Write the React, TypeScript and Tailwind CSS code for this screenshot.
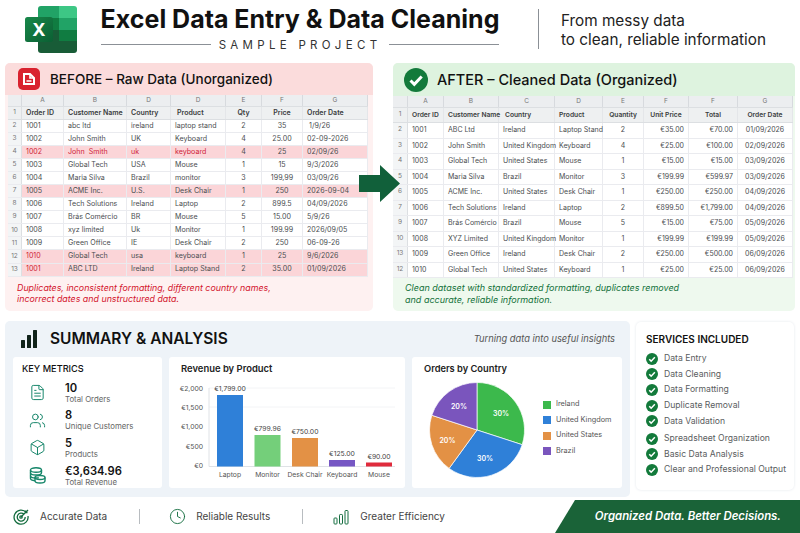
import { Box, Clock, FileText, Users, type LucideIcon } from 'lucide-react';

type Align = 'l' | 'm' | 'c' | 'r';

interface SheetRow {
  num: string;
  cells: string[];
  highlight?: boolean;
  redCells?: number;
}

const BEFORE_HEAD = ['Order ID', 'Customer Name', 'Country', 'Product', 'Qty', 'Price', 'Order Date'];
const BEFORE_ROWS: SheetRow[] = [
  { num: '2', cells: ['1001', 'abc ltd', 'ireland', 'laptop stand', '2', '35', ' 1/9/26'] },
  { num: '3', cells: ['1002', 'John Smith', 'UK', 'Keyboard', '4', '25.00', '02-09-2026'] },
  { num: '4', cells: ['1002', 'John  Smith', 'uk', 'keyboard', '4', '25', '02/09/26'], highlight: true, redCells: 4 },
  { num: '5', cells: ['1003', 'Global Tech', 'USA', 'Mouse', '1', '15', '9/3/2026'] },
  { num: '6', cells: ['1004', 'Maria Silva', 'Brazil', 'monitor', '3', '199,99', '03/09/26'] },
  { num: '7', cells: ['1005', 'ACME Inc.', 'U.S.', 'Desk Chair', '1', '250', '2026-09-04'], highlight: true },
  { num: '8', cells: ['1006', 'Tech Solutions', 'Ireland', 'Laptop', '2', '899.5', '04/09/2026'] },
  { num: '9', cells: ['1007', 'Brás Comércio', 'BR', 'Mouse', '5', '15.00', '5/9/26'] },
  { num: '10', cells: ['1008', 'xyz limited', 'Uk', 'Monitor', '1', '199.99', '2026/09/05'] },
  { num: '11', cells: ['1009', 'Green Office', 'IE', 'Desk Chair', '2', '250', '06-09-26'] },
  { num: '12', cells: ['1010', 'Global Tech', 'usa', 'keyboard', '1', '25', '9/6/2026'], highlight: true, redCells: 1 },
  { num: '13', cells: ['1001', 'ABC LTD', 'Ireland', 'Laptop Stand', '2', '35.00', '01/09/2026'], highlight: true, redCells: 1 },
];

const AFTER_HEAD = ['Order ID', 'Customer Name', 'Country', 'Product', 'Quantity', 'Unit Price', 'Total', 'Order Date'];
const AFTER_ROWS: SheetRow[] = [
  { num: '2', cells: ['1001', 'ABC Ltd', 'Ireland', 'Laptop Stand', '2', '€35.00', '€70.00', '01/09/2026'] },
  { num: '3', cells: ['1002', 'John Smith', 'United Kingdom', 'Keyboard', '4', '€25.00', '€100.00', '02/09/2026'] },
  { num: '4', cells: ['1003', 'Global Tech', 'United States', 'Mouse', '1', '€15.00', '€15.00', '03/09/2026'] },
  { num: '5', cells: ['1004', 'Maria Silva', 'Brazil', 'Monitor', '3', '€199.99', '€599.97', '03/09/2026'] },
  { num: '6', cells: ['1005', 'ACME Inc.', 'United States', 'Desk Chair', '1', '€250.00', '€250.00', '04/09/2026'] },
  { num: '7', cells: ['1006', 'Tech Solutions', 'Ireland', 'Laptop', '2', '€899.50', '€1,799.00', '04/09/2026'] },
  { num: '9', cells: ['1007', 'Brás Comércio', 'Brazil', 'Mouse', '5', '€15.00', '€75.00', '05/09/2026'] },
  { num: '10', cells: ['1008', 'XYZ Limited', 'United Kingdom', 'Monitor', '1', '€199.99', '€199.99', '05/09/2026'] },
  { num: '13', cells: ['1009', 'Green Office', 'Ireland', 'Desk Chair', '2', '€250.00', '€500.00', '06/09/2026'] },
  { num: '12', cells: ['1010', 'Global Tech', 'United States', 'Keyboard', '1', '€25.00', '€25.00', '06/09/2026'] },
];

const BARS = [
  { name: 'Laptop', label: '€1,799.00', x: 48, top: 38, color: '#2f80d8' },
  { name: 'Monitor', label: '€799.96', x: 85.5, top: 78, color: '#74cf7a' },
  { name: 'Desk Chair', label: '€750.00', x: 123, top: 81, color: '#e39145' },
  { name: 'Keyboard', label: '€125.00', x: 160, top: 103, color: '#7657c4' },
  { name: 'Mouse', label: '€90.00', x: 197, top: 105.5, color: '#e02b3c' },
];

const AXIS = [
  { label: '€2,000', y: 31 },
  { label: '€1,500', y: 50 },
  { label: '€1,000', y: 69 },
  { label: '€500', y: 89 },
  { label: '€0', y: 108 },
];

const LEGEND = [
  { name: 'Ireland', color: 'bg-[#3cb94c]' },
  { name: 'United Kingdom', color: 'bg-[#2f80d8]' },
  { name: 'United States', color: 'bg-[#e39145]' },
  { name: 'Brazil', color: 'bg-[#7a55bd]' },
];

const SERVICES = [
  'Data Entry',
  'Data Cleaning',
  'Data Formatting',
  'Duplicate Removal',
  'Data Validation',
  'Spreadsheet Organization',
  'Basic Data Analysis',
  'Clear and Professional Output',
];

function ExcelLogo() {
  return (
    <svg width="53" height="48" viewBox="0 0 53 48" className="shrink-0">
      <defs>
        <linearGradient id="xl-front" x1="0" y1="0" x2="1" y2="1">
          <stop offset="0" stopColor="#18884a" />
          <stop offset="1" stopColor="#0b5f33" />
        </linearGradient>
      </defs>
      <path d="M16 1h18v12H13V4a3 3 0 0 1 3-3z" fill="#21a366" />
      <path d="M34 1h15a3 3 0 0 1 3 3v9H34z" fill="#3dc785" />
      <rect x="13" y="13" width="21" height="12" fill="#107c41" />
      <rect x="34" y="13" width="18" height="12" fill="#21a366" />
      <rect x="13" y="25" width="21" height="11" fill="#185c37" />
      <rect x="34" y="25" width="18" height="11" fill="#107c41" />
      <path d="M13 36h39v9a3 3 0 0 1-3 3H16a3 3 0 0 1-3-3z" fill="#185c37" />
      <rect x="0" y="12" width="28" height="25" rx="2.5" fill="url(#xl-front)" />
      <text x="14" y="31" textAnchor="middle" fontSize="18" fontWeight="700" fill="#fff" fontFamily="Inter, sans-serif">
        X
      </text>
    </svg>
  );
}

function BeforeIcon() {
  return (
    <svg width="22" height="22" viewBox="0 0 22 22" className="shrink-0">
      <rect width="22" height="22" rx="5" fill="#d9222f" />
      <path d="M6 6h6l4 4v6H6z" fill="none" stroke="#fff" strokeWidth="2" />
      <path d="M12 6v4h4M8.500 13h5" fill="none" stroke="#fff" strokeWidth="1.6" />
    </svg>
  );
}

function CheckDot({ size }: { size: number }) {
  return (
    <svg width={size} height={size} viewBox="0 0 24 24" className="shrink-0">
      <circle cx="12" cy="12" r="12" fill="#137a3b" />
      <path d="M6.500 12.500l3.800 3.800 7.400-7.800" fill="none" stroke="#fff" strokeWidth="3" />
    </svg>
  );
}

function CoinStack({ size, strokeWidth, className }: { size: number; strokeWidth: number; className: string }) {
  return (
    <svg width={size} height={size} viewBox="0 0 17 17" fill="none" stroke="currentColor" strokeWidth={strokeWidth} className={className}>
      <ellipse cx="7" cy="3" rx="5.500" ry="2.200" />
      <path d="M1.500 3v2.800c0 1.200 2.500 2.200 5.500 2.200s5.500-1 5.500-2.200V3" />
      <path d="M1.500 5.800v3c0 1.200 2.500 2.200 5.500 2.200 1 0 2-.1 2.800-.3" />
      <ellipse cx="11" cy="10.500" rx="5" ry="2" />
      <path d="M6 10.500v3.300c0 1.200 2.200 2.200 5 2.200s5-1 5-2.200v-3.300" />
      <path d="M1.500 8.800v2.800c0 1.100 1.800 2 4.500 2.200" />
    </svg>
  );
}

const METRICS: { value: string; label: string; Icon: LucideIcon | typeof CoinStack }[] = [
  { value: '10', label: 'Total Orders', Icon: FileText },
  { value: '8', label: 'Unique Customers', Icon: Users },
  { value: '5', label: 'Products', Icon: Box },
  { value: '€3,634.96', label: 'Total Revenue', Icon: CoinStack },
];

function SheetTable({
  gridClass,
  letters,
  head,
  rows,
  aligns,
  headAligns,
  headHeight,
  rowHeight,
  textClass,
  headTextClass,
}: {
  gridClass: string;
  letters: string[];
  head: string[];
  rows: SheetRow[];
  aligns: Align[];
  headAligns: Align[];
  headHeight: string;
  rowHeight: string;
  textClass: string;
  headTextClass: string;
}) {
  const alignClass = (a: Align) => {
    if (a === 'c') return 'justify-center';
    if (a === 'r') return 'justify-end pr-[4px]';
    if (a === 'm') return 'justify-start pl-[6px]';
    return 'justify-start pl-[4px]';
  };

  return (
    <div className="bg-white">
      <div className={`grid ${gridClass} h-[12px] border-b border-[#dcdfe2] bg-[#eceef0] text-[6.5px] text-[#777]`}>
        <div className="border-r border-[#d7dade]" />
        {letters.map((l, i) => (
          <div key={i} className="flex items-center justify-center border-r border-[#d7dade]">
            {l}
          </div>
        ))}
      </div>
      <div className={`grid ${gridClass} ${headHeight} ${headTextClass} border-b border-[#dcdfe2] bg-[#eef0f1] font-semibold text-[#3a3d40]`}>
        <div className="flex items-center justify-center border-r border-[#dcdfe2] text-[6.5px] font-normal text-[#777]">1</div>
        {head.map((h, i) => (
          <div key={i} className={`flex items-center whitespace-nowrap border-r border-[#e4e6e9] ${alignClass(headAligns[i])}`}>
            {h}
          </div>
        ))}
      </div>
      {rows.map((row) => (
        <div key={row.num} className={`grid ${gridClass} ${rowHeight} ${textClass} border-b border-[#eaebef] text-[#4a4d50]`}>
          <div className="flex items-center justify-center border-r border-[#dcdfe2] bg-[#f3f5f6] text-[6.5px] text-[#777]">{row.num}</div>
          {row.cells.map((c, i) => (
            <div
              key={i}
              className={`flex items-center whitespace-pre border-r border-[#eaebef] ${alignClass(aligns[i])} ${
                row.highlight ? 'bg-[#fbd5d8]' : ''
              } ${row.redCells && i < row.redCells ? 'text-[#cf2337]' : ''}`}
            >
              {c}
            </div>
          ))}
        </div>
      ))}
    </div>
  );
}

function RevenueChart() {
  return (
    <svg width="236" height="131" viewBox="0 0 236 131" fontFamily="Inter, sans-serif">
      <path d="M40 31H226M40 50H226" stroke="#f3f4f6" />
      <path d="M40 31V109.500H226" fill="none" stroke="#dfe2e6" />
      {AXIS.map((a) => (
        <text key={a.label} x="34" y={a.y + 2.5} textAnchor="end" fontSize="6.8" fill="#555">
          {a.label}
        </text>
      ))}
      {BARS.map((b) => (
        <g key={b.name}>
          <rect x={b.x} y={b.top} width="26" height={109.5 - b.top} fill={b.color} />
          <text x={b.x + 13} y={b.top - 4} textAnchor="middle" fontSize="6.8" fill="#444">
            {b.label}
          </text>
          <text x={b.x + 13} y="120" textAnchor="middle" fontSize="6.8" fill="#555">
            {b.name}
          </text>
        </g>
      ))}
    </svg>
  );
}

function PieChart() {
  return (
    <svg width="100" height="100" viewBox="-50 -50 100 100" className="shrink-0" fontFamily="Inter, sans-serif">
      <path d="M0 0V-47.500A47.500 47.500 0 0 1 45.200 14.700Z" fill="#3cb94c" stroke="#fff" strokeWidth="0.7" />
      <path d="M0 0L45.200 14.700A47.500 47.500 0 0 1 -27.900 38.400Z" fill="#2f80d8" stroke="#fff" strokeWidth="0.7" />
      <path d="M0 0L-27.900 38.400A47.500 47.500 0 0 1 -45.200 -14.700Z" fill="#e39145" stroke="#fff" strokeWidth="0.7" />
      <path d="M0 0L-45.200 -14.700A47.500 47.500 0 0 1 0 -47.500Z" fill="#7a55bd" stroke="#fff" strokeWidth="0.7" />
      <g fontSize="7" fontWeight="600" fill="#fff" textAnchor="middle">
        <text x="24" y="-14.500">30%</text>
        <text x="8" y="31">30%</text>
        <text x="-29.500" y="13">20%</text>
        <text x="-18" y="-21">20%</text>
      </g>
    </svg>
  );
}

function TargetIcon() {
  return (
    <svg width="17" height="17" viewBox="0 0 17 17" fill="none" stroke="#136c3e" strokeWidth="1.3" className="shrink-0">
      <path d="M13.400 4.600A7 7 0 1 0 15 8" />
      <path d="M11 6.300A4 4 0 1 0 12.200 9" />
      <circle cx="8" cy="9" r="1.200" />
      <path d="M8 9l7-7M12.500 2.500v2h2" />
    </svg>
  );
}

function GrowthIcon() {
  return (
    <svg width="16" height="16" viewBox="0 0 16 16" fill="none" stroke="#136c3e" strokeWidth="1" className="shrink-0">
      <rect x="1" y="9" width="3" height="6" rx="0.8" />
      <rect x="6.500" y="5.500" width="3" height="9.500" rx="0.8" />
      <rect x="12" y="1.500" width="3" height="13.500" rx="0.8" />
    </svg>
  );
}

export default function App() {
  return (
    <div className="relative flex h-[533px] w-[800px] flex-col overflow-hidden bg-white font-['Inter',sans-serif] text-[#111]">
      {/* title strip */}
      <header className="flex h-[63px] shrink-0 items-center pb-[5px] pl-[25px]">
        <ExcelLogo />
        <div className="ml-[23px] -mt-[4px] flex w-[398px] flex-col items-center">
          <h1 className="whitespace-nowrap text-[25px] font-bold leading-[32px] text-[#111]">Excel Data Entry &amp; Data Cleaning</h1>
          <div className="mt-[3px] flex w-full items-center gap-[8px]">
            <span className="h-px flex-1 bg-[#8b9096]" />
            <span className="text-[11.500px] leading-[14px] tracking-[4.3px] text-[#333]">SAMPLE PROJECT</span>
            <span className="h-px flex-1 bg-[#8b9096]" />
          </div>
        </div>
        <span className="ml-[39px] h-[40px] w-px bg-[#8b9096]" />
        <p className="ml-[22px] pt-[1px] text-[15.300px] leading-[19px] text-[#222]">
          From messy data
          <br />
          to clean, reliable information
        </p>
      </header>

      {/* before / after */}
      <section className="relative flex h-[248px] shrink-0 gap-[20px] px-[5px]">
        <div className="flex w-[368px] flex-col rounded-[5px] bg-[#fef1f1]">
          <div className="flex h-[32px] shrink-0 items-center gap-[10px] rounded-t-[5px] bg-[#fbdcdc] pl-[13px]">
            <BeforeIcon />
            <h2 className="text-[13.500px] font-medium">BEFORE – Raw Data (Unorganized)</h2>
          </div>
          <div className="mx-[3px] w-[360px]">
            <SheetTable
              gridClass="grid-cols-[14px_42px_63px_44px_55px_36px_41px_65px]"
              letters={['A', 'B', 'D', 'D', 'E', 'F', 'G']}
              head={BEFORE_HEAD}
              rows={BEFORE_ROWS}
              aligns={['l', 'l', 'l', 'l', 'c', 'c', 'l']}
              headAligns={['l', 'l', 'l', 'm', 'c', 'c', 'l']}
              headHeight="h-[13px]"
              rowHeight="h-[13.050px]"
              textClass="text-[7.100px]"
              headTextClass="text-[7px]"
            />
          </div>
          <p className="ml-[12px] mt-[5px] text-[8.850px] italic leading-[11.500px] text-[#d3142c]">
            Duplicates, inconsistent formatting, different country names,
            <br />
            incorrect dates and unstructured data.
          </p>
        </div>

        <div className="flex w-[402px] flex-col rounded-[5px] bg-[#eef9ee]">
          <div className="flex h-[33px] shrink-0 items-center gap-[9px] rounded-t-[5px] bg-[#def3df] pl-[11px]">
            <CheckDot size={24} />
            <h2 className="text-[14.500px] font-medium">AFTER – Cleaned Data (Organized)</h2>
          </div>
          <div className="w-[400px]">
            <SheetTable
              gridClass="grid-cols-[15px_36px_55px_56px_48px_41px_45px_49px_55px]"
              letters={['A', 'B', 'C', 'D', 'E', 'F', 'F', 'G']}
              head={AFTER_HEAD}
              rows={AFTER_ROWS}
              aligns={['l', 'l', 'l', 'l', 'c', 'r', 'r', 'c']}
              headAligns={['l', 'l', 'm', 'l', 'c', 'c', 'c', 'c']}
              headHeight="h-[15px]"
              rowHeight="h-[15.500px]"
              textClass="text-[7px]"
              headTextClass="text-[6.700px]"
            />
          </div>
          <p className="ml-[12px] mt-[4px] text-[9px] italic leading-[11.500px] text-[#12713a]">
            Clean dataset with standardized formatting, duplicates removed
            <br />
            and accurate, reliable information.
          </p>
        </div>

        <svg width="41" height="37" viewBox="0 0 41 37" className="absolute left-[359px] top-[102px]">
          <path d="M0 10h21V0l20 18.500L21 37V27H0z" fill="#11603a" />
        </svg>
      </section>

      {/* summary + services */}
      <section className="mt-[10px] flex h-[176px] shrink-0 gap-[6px] pl-[5px]">
        <div className="flex w-[625px] flex-col rounded-[5px] bg-[#eef3f8] px-[8px]">
          <div className="flex h-[36px] shrink-0 items-center pl-[8px] pr-[7px]">
            <svg width="16" height="18" viewBox="0 0 16 18" className="shrink-0" fill="#10231a">
              <rect x="0" y="10" width="4" height="8" rx="0.5" />
              <rect x="6" y="5" width="4" height="13" rx="0.5" />
              <rect x="12" y="0" width="4" height="18" rx="0.5" />
            </svg>
            <h2 className="ml-[13px] text-[15.500px] font-semibold">SUMMARY &amp; ANALYSIS</h2>
            <p className="ml-auto text-[9.300px] italic text-[#555]">Turning data into useful insights</p>
          </div>

          <div className="flex h-[131px] gap-[7px]">
            <div className="w-[149px] rounded-[3px] bg-white pl-[9px] pt-[6px]">
              <h3 className="text-[9.200px] font-medium leading-[12px]">KEY METRICS</h3>
              <ul className="mt-[4px] flex flex-col">
                {METRICS.map(({ value, label, Icon }) => (
                  <li key={label} className="flex h-[27.600px] items-center">
                    <Icon size={17} strokeWidth={1.4} className="ml-[7px] shrink-0 text-[#16866a]" />
                    <div className="ml-[19px] flex flex-col">
                      <span className="text-[11.200px] font-semibold leading-[12px]">{value}</span>
                      <span className="text-[7.800px] leading-[10px] text-[#666]">{label}</span>
                    </div>
                  </li>
                ))}
              </ul>
            </div>

            <div className="relative w-[236px] rounded-[3px] bg-white">
              <h3 className="absolute left-[12px] top-[6px] text-[9.450px] font-semibold leading-[12px] text-[#222]">Revenue by Product</h3>
              <RevenueChart />
            </div>

            <div className="w-[210px] rounded-[3px] bg-white pl-[12px] pt-[6px]">
              <h3 className="text-[9.300px] font-semibold leading-[12px] text-[#222]">Orders by Country</h3>
              <div className="mt-[5px] flex items-center">
                <div className="ml-[3px]">
                  <PieChart />
                </div>
                <ul className="ml-[16px] flex flex-col gap-[7px] pb-[4px]">
                  {LEGEND.map((l) => (
                    <li key={l.name} className="flex h-[8.600px] items-center gap-[5px] text-[7.300px] text-[#555]">
                      <span className={`h-[8px] w-[8px] ${l.color}`} />
                      {l.name}
                    </li>
                  ))}
                </ul>
              </div>
            </div>
          </div>
        </div>

        <div className="mt-[1px] h-[168px] w-[158px] rounded-[5px] bg-white pl-[10px] pt-[11px] shadow-[0_0_3px_#e3e7ec]">
          <h3 className="text-[10px] font-semibold leading-[12px]">SERVICES INCLUDED</h3>
          <ul className="mt-[6px] flex flex-col">
            {SERVICES.map((s) => (
              <li
                key={s}
                className={`flex h-[15.600px] items-center gap-[6px] whitespace-nowrap text-[8.650px] text-[#5a5d60] ${
                  s === 'Spreadsheet Organization' ? 'mt-[2px]' : ''
                }`}
              >
                <CheckDot size={12} />
                {s}
              </li>
            ))}
          </ul>
        </div>
      </section>

      {/* footer strip */}
      <footer className="mt-[3px] flex h-[33px] shrink-0 items-center pl-[13px] text-[10px] text-[#444]">
        <TargetIcon />
        <span className="ml-[10px]">Accurate Data</span>
        <span className="ml-[32px] h-[15px] w-px bg-[#b8bcc0]" />
        <Clock size={17} strokeWidth={1.3} className="ml-[29px] shrink-0 text-[#136c3e]" />
        <span className="ml-[10px]">Reliable Results</span>
        <span className="ml-[32px] h-[15px] w-px bg-[#b8bcc0]" />
        <span className="ml-[30px]">
          <GrowthIcon />
        </span>
        <span className="ml-[11px]">Greater Efficiency</span>
        <div className="ml-auto flex h-[33px] w-[245px] items-center justify-end bg-[#1a6338] pr-[19px] text-[11.400px] font-semibold italic text-white [clip-path:polygon(20px_0,100%_0,100%_100%,0_100%)]">
          Organized Data. Better Decisions.
        </div>
      </footer>
    </div>
  );
}
